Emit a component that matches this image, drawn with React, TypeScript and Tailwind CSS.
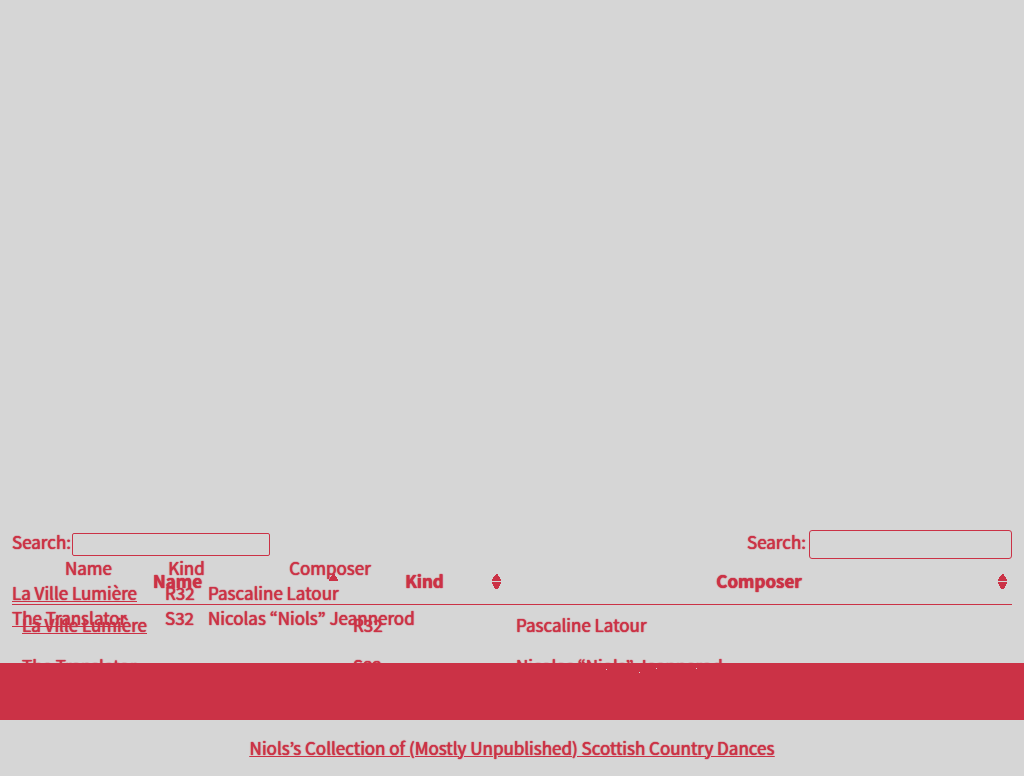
const dances = [
  { name: "La Ville Lumière", kind: "R32", composer: "Pascaline Latour" },
  { name: "The Translator", kind: "S32", composer: "Nicolas “Niols” Jeannerod" },
];

function SortIcon({ ascending = false }: { ascending?: boolean }) {
  return (
    <svg
      className="absolute top-1/2 right-1 -translate-y-1/2"
      width="11"
      height="16"
      viewBox="0 0 11 16"
      fill="currentColor"
      shapeRendering="crispEdges"
      aria-hidden="true"
    >
      {ascending ? (
        <path d="M1 7V6l1-2 2-3 1-1h1l1 1 2 3 1 2v1z" />
      ) : (
        <>
          <path d="M1 7V6l1-2 2-3 1-1h1l1 1 2 3 1 2v1z" />
          <path d="M1 8h9v1L9 11l-2 4H4L2 11 1 9z" />
        </>
      )}
    </svg>
  );
}

function PlainList() {
  return (
    <div className="col-start-1 row-start-1 px-3">
      <div className="flex h-[25px] items-center">
        <label htmlFor="plain-search" className="-mt-0.5 w-[60px]">Search:</label>
        <input
          id="plain-search"
          type="text"
          className="mt-1 h-[23px] w-[198px] rounded-xs border border-[#cb3246] bg-transparent px-1 outline-none"
        />
      </div>
      <table className="w-[440px] table-fixed border-collapse">
        <colgroup>
          <col className="w-[153px]" />
          <col className="w-[43px]" />
          <col />
        </colgroup>
        <thead>
          <tr>
            <th className="p-0 font-normal">Name</th>
            <th className="p-0 font-normal">Kind</th>
            <th className="p-0 font-normal">Composer</th>
          </tr>
        </thead>
        <tbody>
          {dances.map((d) => (
            <tr key={d.name}>
              <td className="p-0"><a href="#" className="underline">{d.name}</a></td>
              <td className="p-0">{d.kind}</td>
              <td className="p-0 whitespace-nowrap">{d.composer}</td>
            </tr>
          ))}
        </tbody>
      </table>
    </div>
  );
}

function SortableList() {
  return (
    <div className="col-start-1 row-start-1 px-3">
      <div className="flex h-[29px] items-center justify-end gap-[3px]">
        <label htmlFor="table-search" className="-mt-1.5">Search:</label>
        <input
          id="table-search"
          type="search"
          className="h-[29px] w-[203px] rounded-[3px] border border-[#cb3246] bg-transparent px-1 outline-none"
        />
      </div>
      <table className="w-full table-fixed border-collapse">
        <colgroup>
          <col className="w-[33.1%]" />
          <col className="w-[16.3%]" />
          <col />
        </colgroup>
        <thead>
          <tr className="border-b border-[#cb3246]">
            <th className="relative px-4 pt-[9px] pb-[11px] font-bold">Name<SortIcon ascending /></th>
            <th className="relative px-4 pt-[9px] pb-[11px] font-bold">Kind<SortIcon /></th>
            <th className="relative px-4 pt-[9px] pb-[11px] font-bold">Composer<SortIcon /></th>
          </tr>
        </thead>
        <tbody>
          {dances.map((d) => (
            <tr key={d.name}>
              <td className="px-[10px] pt-[7px] pb-[9px]"><a href="#" className="underline">{d.name}</a></td>
              <td className="px-[10px] pt-[7px] pb-[9px]">{d.kind}</td>
              <td className="px-[10px] pt-[7px] pb-[9px]">{d.composer}</td>
            </tr>
          ))}
        </tbody>
      </table>
    </div>
  );
}

export default function App() {
  return (
    <div className="flex min-h-screen flex-col bg-[#d6d6d6] font-['Noto_Sans_CJK_KR',sans-serif] text-[17px] leading-[25px] text-[#cb3246] [text-shadow:0_0_1px_#cb3246,0_0_1px_#cb3246]">
      <main className="flex flex-1 flex-col justify-end">
        <div className="grid h-[133px] overflow-hidden">
          <PlainList />
          <SortableList />
        </div>
      </main>
      <div className="flex h-[57px] justify-center bg-[#cb3246]">
        <svg width="1024" height="57" viewBox="0 0 1024 57" fill="#d6d6d6" aria-hidden="true">
          <path d="M606 6h1v1h-1zM639 9h1v1h-1zM656 5h1v1h-1zM696 5h1v1h-1z" />
        </svg>
      </div>
      <footer className="flex h-14 items-center justify-center pb-0.5">
        <a href="#" className="underline">
          Niols’s Collection of (Mostly Unpublished) Scottish Country Dances
        </a>
      </footer>
    </div>
  );
}
